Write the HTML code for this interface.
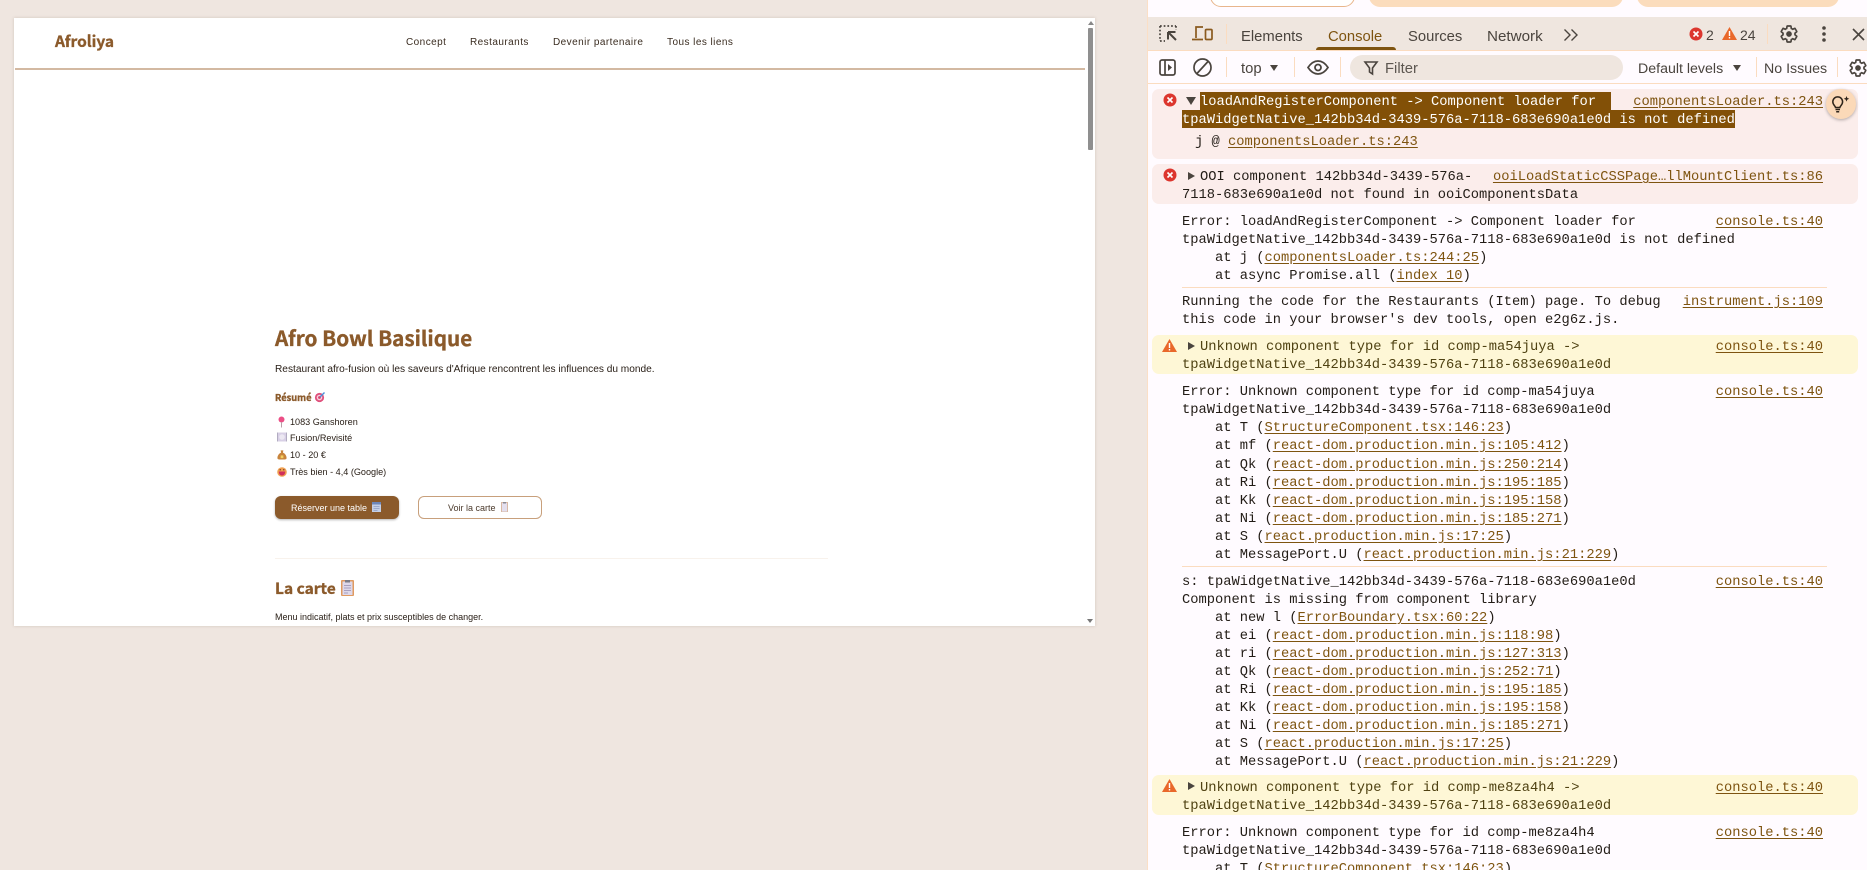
<!DOCTYPE html>
<html lang="fr"><head><meta charset="utf-8"><title>Afroliya</title>
<style>
html,body{margin:0;padding:0;width:1867px;height:870px;overflow:hidden;background:#efe6e0}
body{position:relative;font-family:"Liberation Sans",sans-serif}
div,span,svg{box-sizing:border-box}
#panel{position:absolute;left:14px;top:18px;width:1081px;height:608px;background:#fff;box-shadow:0 0 3px rgba(120,100,80,.25);overflow:hidden}
.p{position:absolute;white-space:nowrap;color:#2a2018;font-size:9.1px;line-height:14px}
.nav{position:absolute;top:36px;font-size:10px;letter-spacing:.45px;line-height:14px;color:#3a2c20;white-space:nowrap}
.h{position:absolute;white-space:nowrap;color:#8b5a2b;font-family:"Noto Sans CJK JP","Liberation Sans",sans-serif;font-weight:700;-webkit-text-stroke:.35px #8b5a2b}
.btn{position:absolute;top:496px;width:124px;height:23px;border-radius:6px}
.bt{position:absolute;top:501px;font-size:9px;line-height:14px;white-space:nowrap}
#dt{position:absolute;left:1147px;top:0;width:720px;height:870px;background:#fffbff;border-left:1px solid #fbdfc6;overflow:hidden}
.bar{position:absolute;background:#efe6df}
.t{position:absolute;font-size:14.8px;line-height:20px;color:#4a443e;white-space:nowrap}
.sep{position:absolute;width:1px;height:20px;background:#fbdcc0}
.m{position:absolute;left:1182px;height:18px;line-height:18px;white-space:pre;font-family:"Liberation Mono",monospace;font-size:13.76px;color:#221c16}
.w{color:#4f4212}
.m u,.r{color:#7e5410;text-decoration:underline;text-underline-offset:2px}
.r{position:absolute;right:44px;height:18px;line-height:18px;white-space:pre;font-family:"Liberation Mono",monospace;font-size:13.76px}
.row{position:absolute;left:1152px;width:706px;border-radius:7px}
.hl{position:absolute;background:#825007}
.tri{position:absolute;width:0;height:0}
svg{position:absolute;overflow:visible}
</style></head><body>

<div id="panel"></div>
<div class="h" style="left:55px;top:30px;font-size:15.5px;line-height:22px">Afroliya</div>
<div class="nav" style="left:406px">Concept</div>
<div class="nav" style="left:470px">Restaurants</div>
<div class="nav" style="left:553px">Devenir partenaire</div>
<div class="nav" style="left:667px">Tous les liens</div>
<div style="position:absolute;left:15px;top:68px;width:1070px;height:2px;background:#d3b9a2"></div>
<div style="position:absolute;left:1085px;top:18px;width:10px;height:608px;background:#fff"></div>
<div style="position:absolute;left:1088px;top:28px;width:5px;height:122px;background:#8f8f8f;border-radius:1px"></div>
<div class="tri" style="left:1088px;top:21px;border:3px solid transparent;border-top:0;border-bottom:4px solid #888"></div>
<div class="tri" style="left:1087px;top:619px;border:3px solid transparent;border-bottom:0;border-top:4px solid #777"></div>

<div class="h" style="left:275px;top:321px;font-size:20.7px;line-height:32px">Afro Bowl Basilique</div>
<div class="p" style="left:275px;top:363px;font-size:10.15px">Restaurant afro-fusion où les saveurs d'Afrique rencontrent les influences du monde.</div>
<div class="h" style="left:275px;top:389px;font-size:9.3px;line-height:16px">Résumé</div>
<svg style="left:314px;top:391px" width="12" height="12" viewBox="0 0 12 12"><circle cx="5.5" cy="6.5" r="4.6" fill="#e0507c"/><circle cx="5.5" cy="6.5" r="2.8" fill="#f7d0dc"/><circle cx="5.5" cy="6.5" r="1.4" fill="#d9406c"/><path d="M6 6L10.5 1.5" stroke="#4a90d9" stroke-width="1.4"/></svg>

<svg style="left:277px;top:416px" width="9" height="12" viewBox="0 0 9 12"><circle cx="4.5" cy="3.5" r="3" fill="#ec4f86"/><path d="M4.5 6v5.500" stroke="#b9a0a8" stroke-width="1"/></svg>
<div class="p" style="left:290px;top:415px">1083 Ganshoren</div>
<svg style="left:277px;top:432px" width="10" height="10" viewBox="0 0 10 10"><rect width="10" height="9" y=".5" fill="#d8d0e6"/><circle cx="5" cy="5" r="2.8" fill="#ece8f2"/><path d="M.5 .5v9M9.500 .5v9" stroke="#a8a4b8" stroke-width=".8"/></svg>
<div class="p" style="left:290px;top:431px">Fusion/Revisité</div>
<svg style="left:277px;top:449px" width="10" height="11" viewBox="0 0 10 12"><path d="M3.500 1.500h3L6 4c2.500 1 4 3.500 4 6 0 1-1 1.500-2 1.500H2c-1 0-2-.5-2-1.500 0-2.500 1.500-5 4-6z" fill="#c8843c"/><rect x="3.500" y="7" width="3" height="3" fill="#f4d060"/></svg>
<div class="p" style="left:290px;top:448px">10 - 20 €</div>
<svg style="left:277px;top:467px" width="10" height="10" viewBox="0 0 10 10"><circle cx="5" cy="5" r="4.800" fill="#f0a050"/><path d="M1.800 4.500h6.400c0 3-1.500 4-3.200 4s-3.200-1-3.200-4z" fill="#d0305c"/><circle cx="3.200" cy="2.800" r=".7" fill="#6a3020"/><circle cx="6.800" cy="2.800" r=".7" fill="#6a3020"/></svg>
<div class="p" style="left:290px;top:465px">Très bien - 4,4 (Google)</div>

<div class="btn" style="left:275px;background:#8b5a2b;box-shadow:0 1px 2px rgba(0,0,0,.3)"></div>
<div class="bt" style="left:291px;color:#fff">Réserver une table</div>
<svg style="left:372px;top:502px" width="9" height="10" viewBox="0 0 9 10"><rect width="9" height="10" fill="#c4cfe6"/><rect width="9" height="2.500" fill="#6d86b8"/><path d="M1.500 4.500h6M1.500 6.500h6M1.500 8.500h4" stroke="#8e9fc4" stroke-width=".8"/></svg>
<div class="btn" style="left:418px;background:#fff;border:1px solid #c8a07c"></div>
<div class="bt" style="left:448px;color:#4b3a2c">Voir la carte</div>
<svg style="left:501px;top:502px" width="7" height="10" viewBox="0 0 7 10"><rect width="7" height="10" fill="#d8b8a4"/><rect x="1" y="1" width="5" height="8.500" fill="#e4dfee"/><rect x="2" width="3" height="1.500" fill="#8a8a94"/></svg>

<div style="position:absolute;left:275px;top:558px;width:553px;height:1px;background:#f8f2ec"></div>
<div class="h" style="left:275px;top:576px;font-size:15.5px;line-height:24px">La carte</div>
<svg style="left:341px;top:580px" width="13" height="16" viewBox="0 0 13 16"><rect width="13" height="16" rx="1" fill="#e09a60"/><rect x="1.500" y="1.500" width="10" height="13.500" fill="#ded8ea"/><rect x="4" y="0" width="5" height="2.500" fill="#7c7c88"/><path d="M3 5.500h7M3 8h7M3 10.500h7M3 13h4" stroke="#a8a0c0"/></svg>
<div class="p" style="left:275px;top:610px;font-size:9px">Menu indicatif, plats et prix susceptibles de changer.</div>

<div id="dt"></div>
<div style="position:absolute;left:1210px;top:-16px;width:145px;height:23px;background:#fff;border:1px solid #e8b68c;border-radius:11px"></div>
<div style="position:absolute;left:1369px;top:-16px;width:254px;height:23px;background:#fbdcbc;border-radius:11px"></div>
<div style="position:absolute;left:1637px;top:-16px;width:202px;height:23px;background:#fbdcbc;border-radius:11px"></div>

<div class="bar" style="left:1148px;top:17px;width:719px;height:33px"></div>
<div style="position:absolute;left:1148px;top:50px;width:719px;height:1px;background:#fbdcc0"></div>
<div style="position:absolute;left:1148px;top:83px;width:719px;height:1px;background:#fbdcc0"></div>

<svg style="left:1159px;top:25px" width="18" height="17" viewBox="0 0 18 17"><path d="M1 1h16M1 1v15M1 16h5" fill="none" stroke="#4a443e" stroke-width="1.700" stroke-dasharray="1.700 2"/><path d="M17 1v4" stroke="#4a443e" stroke-width="1.700" stroke-dasharray="1.700 2"/><path d="M9 7h7.500M9 7v7.500M9 7l8 8" fill="none" stroke="#4a443e" stroke-width="2"/></svg>
<svg style="left:1192px;top:25px" width="21" height="17" viewBox="0 0 21 17"><path d="M4 13V2h7M0 14.500h11" fill="none" stroke="#8a5a1e" stroke-width="1.700"/><rect x="13.500" y="4.500" width="6.500" height="10" rx="1" fill="none" stroke="#8a5a1e" stroke-width="1.700"/></svg>
<div class="sep" style="left:1226px;top:24px"></div>
<div class="t" style="left:1241px;top:27px">Elements</div>
<div class="t" style="left:1328px;top:27px;color:#7e5410">Console</div>
<div style="position:absolute;left:1316px;top:47px;width:80px;height:3px;background:#7e5410;border-radius:3px 3px 0 0"></div>
<div class="t" style="left:1408px;top:27px">Sources</div>
<div class="t" style="left:1487px;top:27px;font-size:15.200px">Network</div>
<svg style="left:1563px;top:28px" width="15" height="14" viewBox="0 0 15 14"><path d="M1.500 1.500l5.500 5.500-5.500 5.500M8.500 1.500l5.500 5.500-5.500 5.500" fill="none" stroke="#4a443e" stroke-width="1.400"/></svg>

<svg style="left:1689px;top:27px" width="14" height="14" viewBox="0 0 14 14"><circle cx="7" cy="7" r="6.500" fill="#dc362e"/><path d="M4.500 4.500l5 5M9.500 4.500l-5 5" stroke="#fff" stroke-width="1.600"/></svg>
<div class="t" style="left:1706px;top:25px;font-size:14px">2</div>
<svg style="left:1722px;top:27px" width="15" height="13" viewBox="0 0 15 13"><path d="M7.500 0L15 13H0z" fill="#e9682a"/><path d="M7.500 4v5M7.500 10v1.500" stroke="#fff" stroke-width="1.400"/></svg>
<div class="t" style="left:1740px;top:25px;font-size:14px">24</div>
<div class="sep" style="left:1767px;top:24px"></div>
<svg style="left:1779px;top:24px" width="20" height="20" viewBox="0 0 24 24"><path d="M19.140 12.940c.04-.3.06-.61.06-.94 0-.32-.02-.64-.07-.94l2.030-1.580a.49.49 0 0 0 .12-.61l-1.920-3.320a.488.488 0 0 0-.59-.22l-2.390.96c-.5-.38-1.030-.7-1.620-.94l-.36-2.540a.484.484 0 0 0-.48-.41h-3.840c-.24 0-.43.17-.47.41l-.36 2.540c-.59.24-1.130.57-1.620.94l-2.390-.96c-.22-.08-.47 0-.59.22L2.740 8.870c-.12.21-.08.47.12.61l2.030 1.580c-.05.3-.09.63-.09.94s.02.64.07.94l-2.030 1.580a.49.49 0 0 0-.12.61l1.920 3.320c.12.22.37.29.59.22l2.390-.96c.5.38 1.030.7 1.620.94l.36 2.540c.05.24.24.41.48.41h3.840c.24 0 .44-.17.47-.41l.36-2.540c.59-.24 1.130-.56 1.620-.94l2.390.96c.22.08.47 0 .59-.22l1.920-3.320c.12-.22.07-.47-.12-.61z" fill="none" stroke="#4a443e" stroke-width="2"/><circle cx="12" cy="12" r="3.400" fill="#4a443e"/></svg>
<svg style="left:1822px;top:26px" width="4" height="16" viewBox="0 0 4 16"><circle cx="2" cy="2" r="1.800" fill="#4a443e"/><circle cx="2" cy="8" r="1.800" fill="#4a443e"/><circle cx="2" cy="14" r="1.800" fill="#4a443e"/></svg>
<svg style="left:1852px;top:28px" width="13" height="13" viewBox="0 0 13 13"><path d="M1 1l11 11M12 1L1 12" stroke="#4a443e" stroke-width="1.600"/></svg>

<svg style="left:1159px;top:59px" width="17" height="17" viewBox="0 0 17 17"><rect x="1" y="1" width="15" height="15" rx="2" fill="none" stroke="#4a443e" stroke-width="1.700"/><path d="M6 1v15" stroke="#4a443e" stroke-width="1.700"/><path d="M9 5l4 3.500-4 3.500z" fill="#4a443e"/></svg>
<svg style="left:1193px;top:58px" width="19" height="19" viewBox="0 0 19 19"><circle cx="9.500" cy="9.500" r="8.500" fill="none" stroke="#4a443e" stroke-width="1.700"/><path d="M4 15.500L15 3.500" stroke="#4a443e" stroke-width="1.700"/></svg>
<div class="sep" style="left:1226px;top:57px"></div>
<div class="t" style="left:1241px;top:59px">top</div>
<div class="tri" style="left:1270px;top:65px;border:4.500px solid transparent;border-bottom:0;border-top:6px solid #4a443e"></div>
<div class="sep" style="left:1294px;top:57px"></div>
<svg style="left:1307px;top:60px" width="22" height="15" viewBox="0 0 22 15"><path d="M1 7.500C4 3 7 1 11 1s7 2 10 6.500C18 12 15 14 11 14S4 12 1 7.500z" fill="none" stroke="#4a443e" stroke-width="1.700"/><circle cx="11" cy="7.500" r="3" fill="none" stroke="#4a443e" stroke-width="1.800"/></svg>
<div class="sep" style="left:1340px;top:57px"></div>
<div class="bar" style="left:1350px;top:55px;width:273px;height:25px;border-radius:13px"></div>
<svg style="left:1364px;top:61px" width="14" height="14" viewBox="0 0 14 14"><path d="M1 1h12L8.500 7v6L5.500 11V7z" fill="none" stroke="#4a443e" stroke-width="1.600"/></svg>
<div class="t" style="left:1385px;top:59px;color:#5c5650">Filter</div>
<div class="t" style="left:1638px;top:59px;font-size:14.200px">Default levels</div>
<div class="tri" style="left:1733px;top:65px;border:4.500px solid transparent;border-bottom:0;border-top:6px solid #4a443e"></div>
<div class="sep" style="left:1756px;top:57px"></div>
<div class="t" style="left:1764px;top:59px;font-size:14.200px">No Issues</div>
<div class="sep" style="left:1837px;top:57px"></div>
<svg style="left:1848px;top:58px" width="20" height="20" viewBox="0 0 24 24"><path d="M19.140 12.940c.04-.3.06-.61.06-.94 0-.32-.02-.64-.07-.94l2.030-1.580a.49.49 0 0 0 .12-.61l-1.920-3.320a.488.488 0 0 0-.59-.22l-2.390.96c-.5-.38-1.030-.7-1.620-.94l-.36-2.540a.484.484 0 0 0-.48-.41h-3.840c-.24 0-.43.17-.47.41l-.36 2.540c-.59.24-1.130.57-1.620.94l-2.390-.96c-.22-.08-.47 0-.59.22L2.740 8.870c-.12.21-.08.47.12.61l2.030 1.580c-.05.3-.09.63-.09.94s.02.64.07.94l-2.030 1.580a.49.49 0 0 0-.12.61l1.920 3.320c.12.22.37.29.59.22l2.390-.96c.5.38 1.030.7 1.620.94l.36 2.540c.05.24.24.41.48.41h3.840c.24 0 .44-.17.47-.41l.36-2.540c.59-.24 1.130-.56 1.620-.94l2.390.96c.22.08.47 0 .59-.22l1.920-3.320c.12-.22.07-.47-.12-.61z" fill="none" stroke="#4a443e" stroke-width="2"/><circle cx="12" cy="12" r="3.400" fill="#4a443e"/></svg>

<div class="row" style="top:89px;height:70px;background:#fbedeb"></div>
<div class="row" style="top:164px;height:40px;background:#fbedeb"></div>
<div class="row" style="top:335px;height:39px;background:#fef7d6"></div>
<div class="row" style="top:775px;height:40px;background:#fef7d6"></div>
<div class="hl" style="left:1200px;top:92px;width:411px;height:18px"></div>
<div class="hl" style="left:1182px;top:110px;width:553px;height:18px"></div>

<svg style="left:1163px;top:93px" width="14" height="14" viewBox="0 0 14 14"><circle cx="7" cy="7" r="6.500" fill="#dc362e"/><path d="M4.500 4.500l5 5M9.500 4.500l-5 5" stroke="#fff" stroke-width="1.600"/></svg>
<div class="tri" style="left:1186px;top:97px;border:5px solid transparent;border-bottom:0;border-top:8px solid #4a443e"></div>
<svg style="left:1163px;top:168px" width="14" height="14" viewBox="0 0 14 14"><circle cx="7" cy="7" r="6.500" fill="#dc362e"/><path d="M4.500 4.500l5 5M9.500 4.500l-5 5" stroke="#fff" stroke-width="1.600"/></svg>
<div class="tri" style="left:1188px;top:172px;border:4.500px solid transparent;border-right:0;border-left:7px solid #4a443e"></div>
<svg style="left:1162px;top:339px" width="15" height="13" viewBox="0 0 15 13"><path d="M7.500 0L15 13H0z" fill="#e9682a"/><path d="M7.500 4v5M7.500 10v1.500" stroke="#fff" stroke-width="1.400"/></svg>
<div class="tri" style="left:1188px;top:342px;border:4.500px solid transparent;border-right:0;border-left:7px solid #4a443e"></div>
<svg style="left:1162px;top:779px" width="15" height="13" viewBox="0 0 15 13"><path d="M7.500 0L15 13H0z" fill="#e9682a"/><path d="M7.500 4v5M7.500 10v1.500" stroke="#fff" stroke-width="1.400"/></svg>
<div class="tri" style="left:1188px;top:782px;border:4.500px solid transparent;border-right:0;border-left:7px solid #4a443e"></div>

<div class="m" style="left:1200px;top:94px;color:#fff">loadAndRegisterComponent -&gt; Component loader for</div>
<div class="r" style="top:94px">componentsLoader.ts:243</div>
<div class="m" style="top:112px;color:#fff">tpaWidgetNative_142bb34d-3439-576a-7118-683e690a1e0d is not defined</div>
<div class="m" style="left:1195px;top:134px">j @ <u>componentsLoader.ts:243</u></div>

<div class="m" style="left:1200px;top:169px">OOI component 142bb34d-3439-576a-</div>
<div class="r" style="top:169px">ooiLoadStaticCSSPage…llMountClient.ts:86</div>
<div class="m" style="top:187px">7118-683e690a1e0d not found in ooiComponentsData</div>

<div class="m" style="top:214px">Error: loadAndRegisterComponent -&gt; Component loader for</div>
<div class="r" style="top:214px">console.ts:40</div>
<div class="m" style="top:232px">tpaWidgetNative_142bb34d-3439-576a-7118-683e690a1e0d is not defined</div>
<div class="m" style="top:250px">    at j (<u>componentsLoader.ts:244:25</u>)</div>
<div class="m" style="top:268px">    at async Promise.all (<u>index 10</u>)</div>
<div style="position:absolute;left:1182px;top:287px;width:645px;height:1px;background:#fbdcc0"></div>

<div class="m" style="top:294px">Running the code for the Restaurants (Item) page. To debug</div>
<div class="r" style="top:294px">instrument.js:109</div>
<div class="m" style="top:312px">this code in your browser's dev tools, open e2g6z.js.</div>

<div class="m w" style="left:1200px;top:339px">Unknown component type for id comp-ma54juya -&gt;</div>
<div class="r" style="top:339px">console.ts:40</div>
<div class="m w" style="top:357px">tpaWidgetNative_142bb34d-3439-576a-7118-683e690a1e0d</div>

<div class="m" style="top:384px">Error: Unknown component type for id comp-ma54juya</div>
<div class="r" style="top:384px">console.ts:40</div>
<div class="m" style="top:402px">tpaWidgetNative_142bb34d-3439-576a-7118-683e690a1e0d</div>
<div class="m" style="top:420px">    at T (<u>StructureComponent.tsx:146:23</u>)</div>
<div class="m" style="top:438px">    at mf (<u>react-dom.production.min.js:105:412</u>)</div>
<div class="m" style="top:457px">    at Qk (<u>react-dom.production.min.js:250:214</u>)</div>
<div class="m" style="top:475px">    at Ri (<u>react-dom.production.min.js:195:185</u>)</div>
<div class="m" style="top:493px">    at Kk (<u>react-dom.production.min.js:195:158</u>)</div>
<div class="m" style="top:511px">    at Ni (<u>react-dom.production.min.js:185:271</u>)</div>
<div class="m" style="top:529px">    at S (<u>react.production.min.js:17:25</u>)</div>
<div class="m" style="top:547px">    at MessagePort.U (<u>react.production.min.js:21:229</u>)</div>
<div style="position:absolute;left:1182px;top:566px;width:645px;height:1px;background:#fbdcc0"></div>

<div class="m" style="top:574px">s: tpaWidgetNative_142bb34d-3439-576a-7118-683e690a1e0d</div>
<div class="r" style="top:574px">console.ts:40</div>
<div class="m" style="top:592px">Component is missing from component library</div>
<div class="m" style="top:610px">    at new l (<u>ErrorBoundary.tsx:60:22</u>)</div>
<div class="m" style="top:628px">    at ei (<u>react-dom.production.min.js:118:98</u>)</div>
<div class="m" style="top:646px">    at ri (<u>react-dom.production.min.js:127:313</u>)</div>
<div class="m" style="top:664px">    at Qk (<u>react-dom.production.min.js:252:71</u>)</div>
<div class="m" style="top:682px">    at Ri (<u>react-dom.production.min.js:195:185</u>)</div>
<div class="m" style="top:700px">    at Kk (<u>react-dom.production.min.js:195:158</u>)</div>
<div class="m" style="top:718px">    at Ni (<u>react-dom.production.min.js:185:271</u>)</div>
<div class="m" style="top:736px">    at S (<u>react.production.min.js:17:25</u>)</div>
<div class="m" style="top:754px">    at MessagePort.U (<u>react.production.min.js:21:229</u>)</div>

<div class="m w" style="left:1200px;top:780px">Unknown component type for id comp-me8za4h4 -&gt;</div>
<div class="r" style="top:780px">console.ts:40</div>
<div class="m w" style="top:798px">tpaWidgetNative_142bb34d-3439-576a-7118-683e690a1e0d</div>

<div class="m" style="top:825px">Error: Unknown component type for id comp-me8za4h4</div>
<div class="r" style="top:825px">console.ts:40</div>
<div class="m" style="top:843px">tpaWidgetNative_142bb34d-3439-576a-7118-683e690a1e0d</div>
<div class="m" style="top:861px">    at T (<u>StructureComponent.tsx:146:23</u>)</div>

<div style="position:absolute;left:1826px;top:89px;width:30px;height:30px;border-radius:50%;background:#fbd9b8;box-shadow:0 1px 3px rgba(0,0,0,.3)"></div>
<svg style="left:1832px;top:96px" width="18" height="17" viewBox="0 0 18 17"><path d="M3.500 11.500C3.500 10 .8 9 .8 5.800a4.900 4.900 0 0 1 9.800 0c0 3.200-2.700 4.200-2.700 5.700z" fill="none" stroke="#2e241a" stroke-width="1.500"/><path d="M3.500 13.500h4.500M4.200 15.800h3" stroke="#2e241a" stroke-width="1.500"/><path d="M14.500 0l.8 2 2 .8-2 .8-.8 2-.8-2-2-.8 2-.8z" fill="#2e241a"/></svg>

</body></html>
